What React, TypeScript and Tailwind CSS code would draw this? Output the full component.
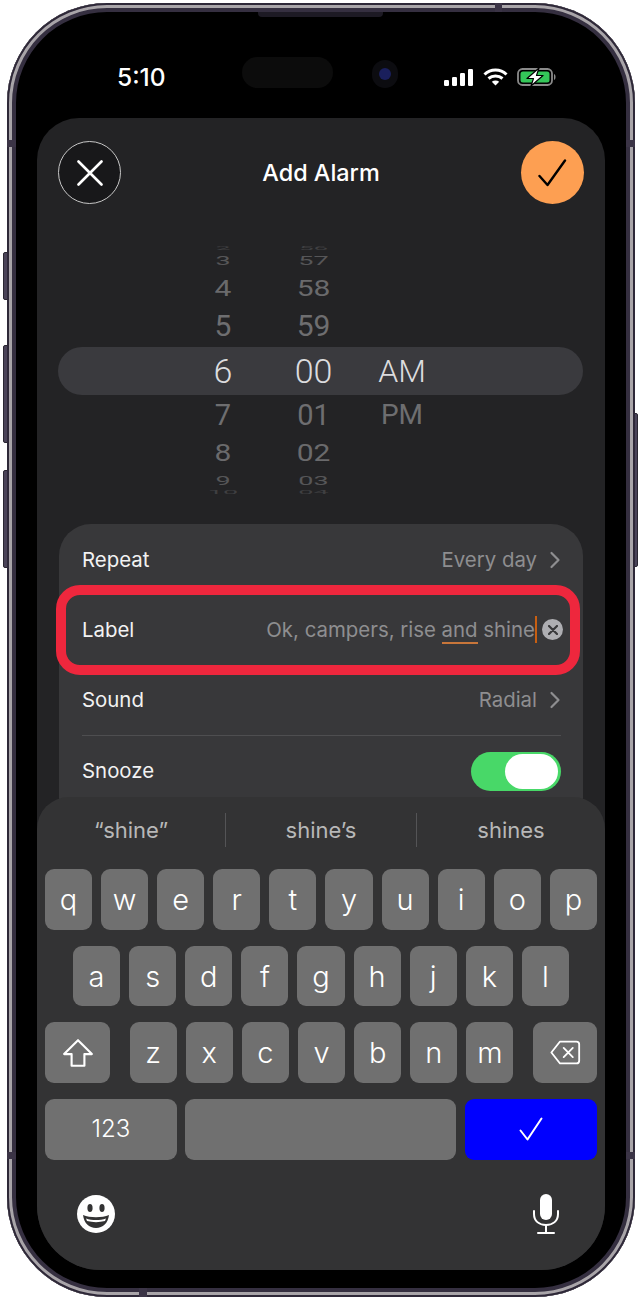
import { ReactNode } from "react";

const wheelRows = [
  { box: "h-[6px]", text: "text-[26px] scale-y-[0.2] text-[#3f3f41]", hour: "2", minute: "56" },
  { box: "h-[18px]", text: "text-[27px] scale-y-[0.5] text-[#565658]", hour: "3", minute: "57" },
  { box: "h-[38px]", text: "text-[30px] scale-y-[0.76] text-[#6a6a6c]", hour: "4", minute: "58" },
  { box: "h-[38px]", text: "text-[30px] scale-y-[0.98] text-[#6e6e70]", hour: "5", minute: "59" },
  { box: "h-[52px]", text: "text-[34px] font-light text-[#dcdcde]", hour: "6", minute: "00" },
  { box: "h-[36px]", text: "text-[29px] text-[#6e6e70]", hour: "7", minute: "01" },
  { box: "h-[40px]", text: "text-[30px] scale-y-[0.78] text-[#6a6a6c]", hour: "8", minute: "02" },
  { box: "h-[14px]", text: "text-[27px] scale-y-[0.48] text-[#565658]", hour: "9", minute: "03" },
  { box: "h-[10px]", text: "text-[27px] scale-y-[0.18] text-[#3f3f41]", hour: "10", minute: "04" },
];

function Chevron() {
  return (
    <svg width="12" height="18" viewBox="0 0 12 18" fill="none" stroke="#8e8e90" strokeWidth="2.2" strokeLinecap="round" strokeLinejoin="round">
      <path d="M2.5 2 L9.5 9 L2.5 16" />
    </svg>
  );
}

function Row({ label, children }: { label: string; children: ReactNode }) {
  return (
    <div className="h-[70px] flex items-center justify-between text-[20.4px]">
      <span className="text-[#f2f2f2]">{label}</span>
      {children}
    </div>
  );
}

function Key({ children, className = "flex-1" }: { children?: ReactNode; className?: string }) {
  return (
    <div className={"h-[60.7px] rounded-[9px] bg-[#707070] text-white flex items-center justify-center " + className}>
      {children}
    </div>
  );
}

function KeyRow({ letters, className = "" }: { letters: string; className?: string }) {
  return (
    <div className={"flex gap-[9px] " + className}>
      {letters.split("").map((l) => (
        <Key key={l}>
          <span className="text-[29px] leading-none font-[350]">{l}</span>
        </Key>
      ))}
    </div>
  );
}

function StatusIcons() {
  return (
    <div className="flex items-center">
      <svg width="29" height="17" viewBox="0 0 29 17" fill="white">
        <rect x="0" y="11" width="5" height="6" rx="1.2" />
        <rect x="8" y="8" width="5" height="9" rx="1.2" />
        <rect x="16" y="4" width="5" height="13" rx="1.2" />
        <rect x="24" y="0" width="5" height="17" rx="1.2" />
      </svg>
      <svg className="ml-[10px]" width="25" height="18" viewBox="0 0 25 18" fill="none" stroke="white" strokeWidth="3">
        <path d="M1.5 6.5 C7.5 0.5 17.5 0.5 23.5 6.5" />
        <path d="M5.5 10.5 C9.5 7 15.5 7 19.5 10.5" />
        <path d="M12.5 17.5 L8.8 13.8 C11 12.2 14 12.2 16.2 13.8 Z" fill="white" stroke="none" />
      </svg>
      <svg className="ml-[9px]" width="40" height="18" viewBox="0 0 40 18" fill="none">
        <rect x="1" y="1" width="34" height="16" rx="4.5" stroke="#8a8a8a" strokeWidth="1.8" />
        <rect x="3.5" y="3.5" width="29" height="11" rx="2.5" fill="#34c759" />
        <path d="M37 6 C39 6.5 39 11.5 37 12 Z" fill="#8a8a8a" />
        <path d="M22 0 L10 10.5 H16.5 L14 18 L26 7.5 H19.5 Z" fill="white" stroke="black" strokeWidth="1.2" strokeLinejoin="round" />
      </svg>
    </div>
  );
}

export default function App() {
  return (
    <div className="relative w-[642px] h-[1301px] bg-white overflow-hidden font-['Inter',sans-serif]">
      {/* side buttons */}
      <div className="absolute left-[3px] top-[252px] w-[6px] h-[48px] rounded-l-[2px] bg-[#4a4358] border border-[#2a2632]" />
      <div className="absolute left-[3px] top-[345px] w-[6px] h-[98px] rounded-l-[2px] bg-[#4a4358] border border-[#2a2632]" />
      <div className="absolute left-[3px] top-[470px] w-[6px] h-[98px] rounded-l-[2px] bg-[#4a4358] border border-[#2a2632]" />
      <div className="absolute left-[633px] top-[413px] w-[5px] h-[154px] rounded-r-[2px] bg-[#4a4358] border border-[#2a2632]" />

      <div className="absolute left-[7px] top-[3px] w-[628px] h-[1294px] rounded-[100px] bg-black shadow-[inset_0_0_0_2px_#2e2838,inset_0_0_0_5px_#a9a5a9,inset_0_0_0_9px_#352f40] flex flex-col">
        {/* antenna bands */}
        <div className="absolute left-[488px] top-0 w-[7px] h-[9px] bg-[#3b3446]" />
        <div className="absolute left-[132px] bottom-0 w-[8px] h-[9px] bg-[#3b3446]" />
        <div className="absolute left-0 top-[137px] w-[9px] h-[7px] bg-[#3b3446]" />
        <div className="absolute right-0 top-[137px] w-[9px] h-[7px] bg-[#3b3446]" />
        <div className="absolute left-0 bottom-[138px] w-[9px] h-[7px] bg-[#3b3446]" />
        <div className="absolute right-0 bottom-[138px] w-[9px] h-[7px] bg-[#3b3446]" />

        {/* status bar */}
        <div className="relative h-[115px] shrink-0">
          <div className="absolute left-[251px] top-[9px] w-[125px] h-[5px] rounded-b-[4px] bg-[#1d1a24]" />
          <span className="absolute left-[110px] top-[59px] text-[24.5px] leading-[30px] font-medium text-white">5:10</span>
          <div className="absolute left-[235px] top-[54px] w-[91px] h-[31px] rounded-full bg-[#0c0c0c]" />
          <div className="absolute left-[365px] top-[57px] w-[26px] h-[28px] rounded-full bg-[#0c0c10] flex items-center justify-center">
            <div className="w-[12px] h-[12px] rounded-full bg-[#1a1f5c]" />
          </div>
          <div className="absolute left-[437px] top-[65px]">
            <StatusIcons />
          </div>
        </div>

        {/* sheet */}
        <div className="mx-[30px] h-[1152px] rounded-t-[42px] rounded-b-[64px] bg-[#232325] overflow-hidden flex flex-col">
          <div className="pt-[23px] px-[21px] flex items-center justify-between">
            <div className="w-[63px] h-[63px] rounded-full border border-[#c8c8c8] bg-[#18181a] flex items-center justify-center">
              <svg width="26" height="26" viewBox="0 0 26 26" stroke="white" strokeWidth="2.6" strokeLinecap="round">
                <path d="M1.5 1.5 L24.5 24.5 M24.5 1.5 L1.5 24.5" />
              </svg>
            </div>
            <span className="text-[23.4px] font-medium text-white">Add Alarm</span>
            <div className="w-[63px] h-[63px] rounded-full bg-[#fd9f52] flex items-center justify-center">
              <svg width="30" height="28" viewBox="0 0 30 28" fill="none" stroke="black" strokeWidth="2.4" strokeLinecap="round" strokeLinejoin="round">
                <path d="M1.5 17 L9.5 26 L27 1.5" />
              </svg>
            </div>
          </div>

          {/* time wheel */}
          <div className="relative mt-[41px] h-[252px] shrink-0 font-['Roboto',sans-serif]">
            <div className="absolute left-[21px] top-[102px] w-[525px] h-[48px] rounded-[24px] bg-[#3a3a3e]" />
            <div className="relative pl-[141px] flex">
              <div className="w-[90px] flex flex-col">
                {wheelRows.map((r) => (
                  <div key={r.hour} className={"flex items-center justify-center overflow-hidden " + r.box}>
                    <span className={"leading-none " + r.text}>{r.hour}</span>
                  </div>
                ))}
              </div>
              <div className="w-[91px] flex flex-col">
                {wheelRows.map((r) => (
                  <div key={r.minute} className={"flex items-center justify-center overflow-hidden " + r.box}>
                    <span className={"leading-none " + r.text}>{r.minute}</span>
                  </div>
                ))}
              </div>
              <div className="w-[86px] flex flex-col pt-[100px]">
                <div className="h-[52px] flex items-center justify-center text-[32px] font-light text-[#dcdcde]">AM</div>
                <div className="h-[36px] flex items-center justify-center text-[28px] text-[#6e6e70]">PM</div>
              </div>
            </div>
          </div>

          {/* settings card */}
          <div className="relative mt-[27px] mx-[22px] h-[306px] shrink-0 rounded-[32px] bg-[#38383a] pl-[23px] pr-[22px] pt-px">
            <Row label="Repeat">
              <div className="flex items-center gap-[12px] text-[#8e8e90]">
                <span>Every day</span>
                <Chevron />
              </div>
            </Row>
            <Row label="Label">
              <div className="relative flex items-center text-[#8e8e90] -mr-[2px]">
                <span className="whitespace-nowrap">
                  Ok, campers, rise <span className="border-b-2 border-[#c8763a]">and</span> shine
                </span>
                <span className="w-[2px] h-[27px] bg-[#c85f12]" />
                <div className="ml-[5px] w-[21px] h-[21px] rounded-full bg-[#aeaeb2] flex items-center justify-center">
                  <svg width="10" height="10" viewBox="0 0 10 10" stroke="#38383a" strokeWidth="2.2" strokeLinecap="round">
                    <path d="M1 1 L9 9 M9 1 L1 9" />
                  </svg>
                </div>
              </div>
            </Row>
            <Row label="Sound">
              <div className="flex items-center gap-[12px] text-[#8e8e90]">
                <span>Radial</span>
                <Chevron />
              </div>
            </Row>
            <div className="h-px bg-[#4e4e50]" />
            <Row label="Snooze">
              <div className="w-[90px] h-[39px] rounded-full bg-[#48d868] flex items-center justify-end pr-[3px]">
                <div className="w-[53px] h-[35px] rounded-full bg-white" />
              </div>
            </Row>
          </div>

          {/* keyboard */}
          <div className="relative -mt-[33px] flex-1 rounded-t-[32px] bg-[#333334] px-[8px]">
            <div className="h-[72px] pt-[16px] -mx-[8px] flex items-start">
              <div className="w-[188px] h-[34px] flex items-center justify-center text-[22px] text-[#b8b8b8]">“shine”</div>
              <div className="w-px h-[34px] bg-[#545456]" />
              <div className="w-[190px] h-[34px] flex items-center justify-center text-[22px] text-[#b8b8b8]">shine’s</div>
              <div className="w-px h-[34px] bg-[#545456]" />
              <div className="flex-1 h-[34px] flex items-center justify-center text-[22px] text-[#b8b8b8]">shines</div>
            </div>
            <div className="flex flex-col gap-[16px]">
              <KeyRow letters="qwertyuiop" />
              <KeyRow letters="asdfghjkl" className="px-[28px]" />
              <div className="flex justify-between">
                <Key className="w-[65px]">
                  <svg width="32" height="32" viewBox="0 0 30 30" fill="none" stroke="white" strokeWidth="2" strokeLinejoin="round">
                    <path d="M15 3 L28 16 H21 V27 H9 V16 H2 Z" />
                  </svg>
                </Key>
                <KeyRow letters="zxcvbnm" className="w-[384px]" />
                <Key className="w-[64px]">
                  <svg width="31" height="27" viewBox="0 0 34 28" fill="none" stroke="white" strokeWidth="2" strokeLinejoin="round" strokeLinecap="round">
                    <path d="M11 2 H29 A3 3 0 0 1 32 5 V23 A3 3 0 0 1 29 26 H11 L1.5 14 Z" />
                    <path d="M15 9 L25 19 M25 9 L15 19" />
                  </svg>
                </Key>
              </div>
              <div className="flex gap-[8px]">
                <Key className="w-[132px]">
                  <span className="text-[24px] font-light">123</span>
                </Key>
                <Key className="w-[272px]" />
                <Key className="w-[132px] !bg-[#0000ff] ml-px">
                  <svg width="26" height="24" viewBox="0 0 24 24" fill="none" stroke="white" strokeWidth="2" strokeLinecap="round" strokeLinejoin="round">
                    <path d="M1.5 13.5 L8.5 22.5 L22.5 1.5" />
                  </svg>
                </Key>
              </div>
            </div>
            <div className="mt-[34px] pl-[32px] pr-[37px] flex items-center justify-between">
              <svg width="38" height="38" viewBox="0 0 38 38">
                <circle cx="19" cy="19" r="19" fill="white" />
                <ellipse cx="13" cy="13" rx="2.6" ry="4" fill="#333334" />
                <ellipse cx="25" cy="13" rx="2.6" ry="4" fill="#333334" />
                <path d="M6 20 C13 23 25 23 32 20 C31 28 26 33 19 33 C12 33 7 28 6 20 Z" fill="#333334" />
                <path d="M9 23.5 C15 25.5 23 25.5 29 23.5 L28 26 C22 27.5 16 27.5 10 26 Z" fill="white" />
              </svg>
              <svg width="28" height="40" viewBox="0 0 28 40" fill="none" stroke="white" strokeWidth="2" strokeLinecap="round">
                <rect x="8" y="0" width="12" height="26" rx="6" fill="white" stroke="none" />
                <path d="M2 17 V20 C2 27 7 31 14 31 C21 31 26 27 26 20 V17" />
                <path d="M14 31 V38 M6 39 H22" />
              </svg>
            </div>
          </div>
        </div>
      </div>

      {/* red highlight around the label row */}
      <div className="absolute left-[56px] top-[585px] w-[524px] h-[90px] rounded-[24px] border-[10px] border-[#ee273d]" />
    </div>
  );
}
